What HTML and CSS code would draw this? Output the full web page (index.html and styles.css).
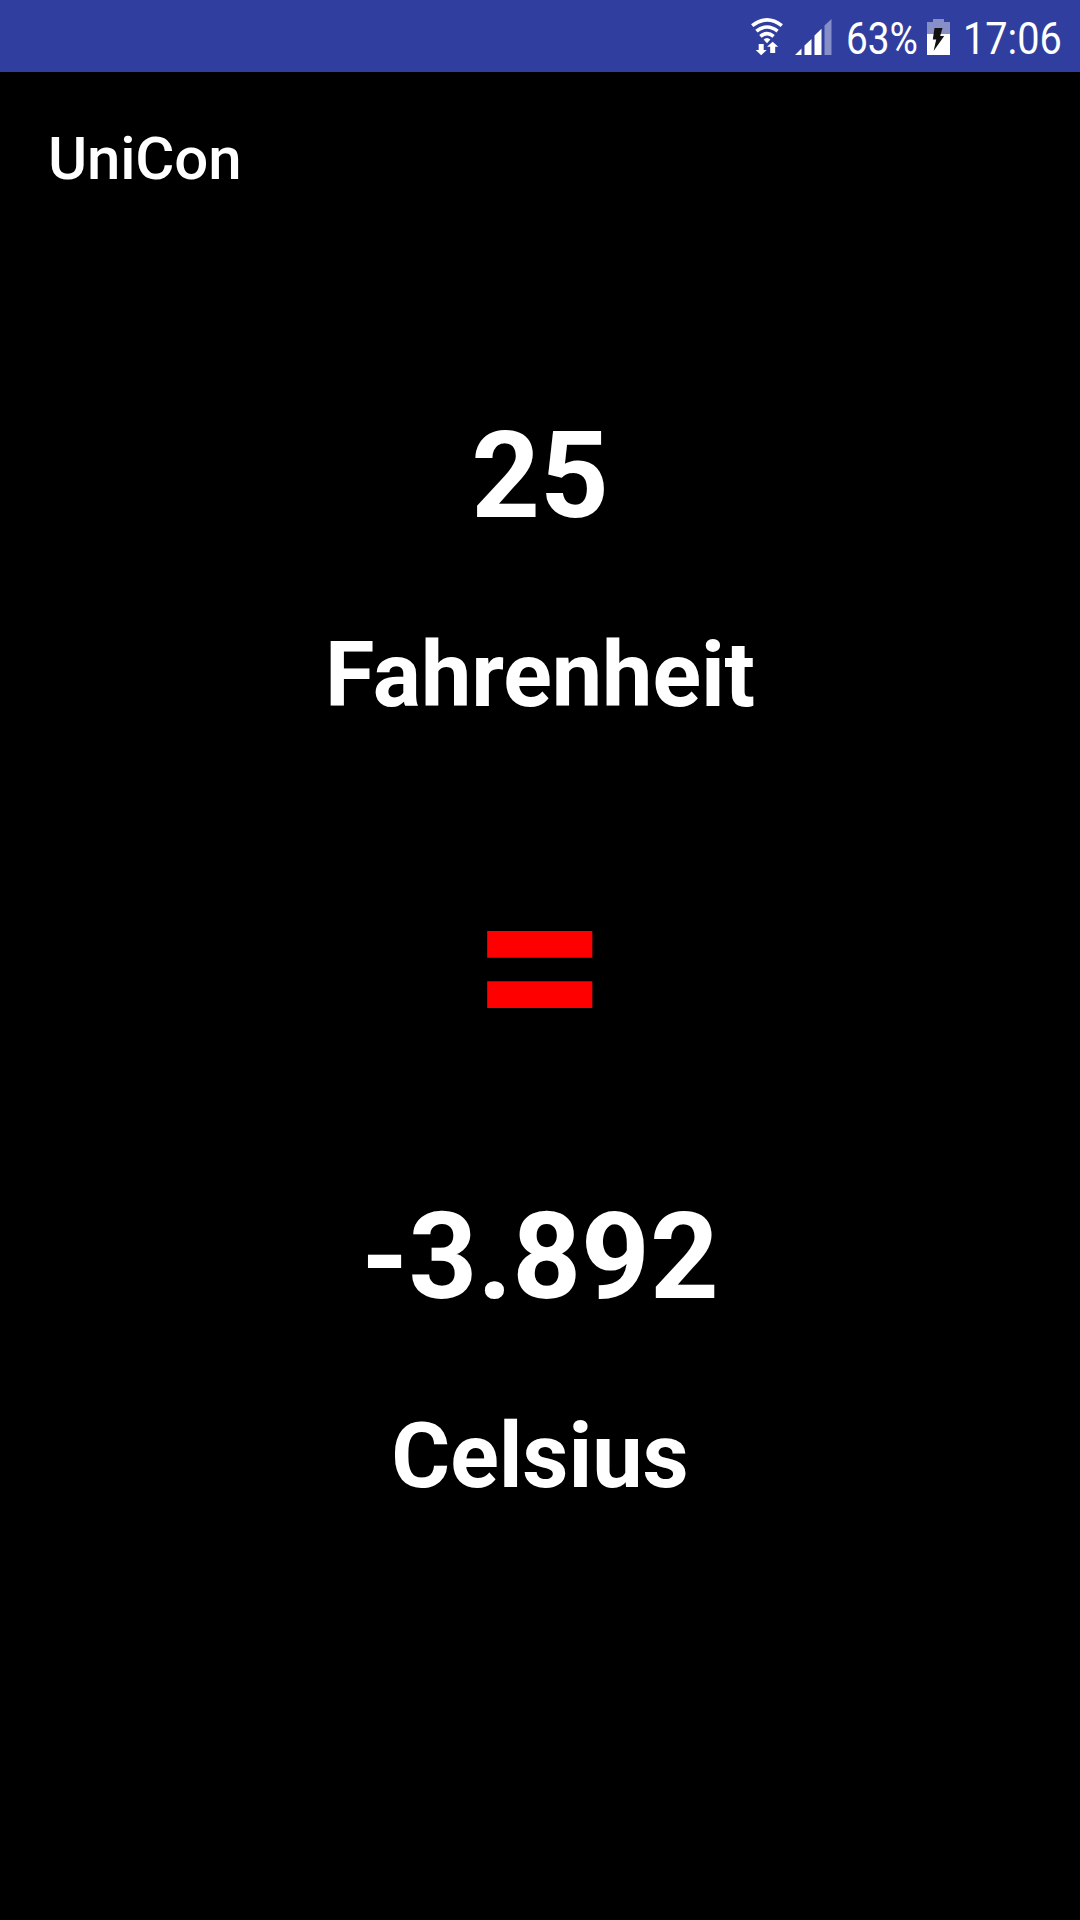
FILE: index.html
```html
<!DOCTYPE html>
<html lang="en">
<head>
<meta charset="utf-8">
<title>UniCon</title>
<link rel="stylesheet" href="styles.css">
</head>
<body>
<header class="status-bar">
  <svg class="wifi" width="32" height="37" viewBox="0 0 32 37" aria-label="Wi-Fi">
    <g fill="none" stroke="#fff" stroke-width="3.6">
      <path d="M1.200 7.700Q16 -3.900 30.800 7.700"/>
      <path d="M5.400 13.200Q16 4.800 26.600 13.200"/>
      <path d="M9.400 18.400Q16 12.900 22.600 18.400"/>
    </g>
    <path fill="#fff" d="M12.600 21.500Q16 18.500 19.400 21.500L16 25.200ZM7.700 26h5v6h3L10.200 37.200 4.700 32h3zM19.200 35v-6.200h-3.200L21.700 23.700l5.500 5.100h-3V35z"/>
  </svg>
  <svg class="signal" width="37" height="36" viewBox="0 0 37 36" aria-label="Signal">
    <path fill="#fff" d="M0 36l6.500-6.500V36zM9.500 36V26.500L16.500 20v16zM19.500 36V16.500L26.500 9.700V36z"/>
    <path fill="#fff" fill-opacity=".42" d="M29.500 36V6.500L36.500 0v36z"/>
  </svg>
  <span class="charge">63%</span>
  <svg class="battery" width="23" height="36" viewBox="0 0 23 36" aria-label="Charging">
    <path fill="#fff" fill-opacity=".42" d="M0 3h6V0h11v3h6v12H0z"/>
    <path fill="#fff" d="M0 15h23v21H0z"/>
    <path fill="#111" d="M7.500 9h8l-2.300 8h4L6.600 32l2.600-11.500H5.800z"/>
  </svg>
  <span class="clock">17:06</span>
</header>
<h1 class="app-title">UniCon</h1>
<main class="conversion">
  <div class="value">25</div>
  <div class="unit">Fahrenheit</div>
  <div class="equals">=</div>
  <div class="value">-3.892</div>
  <div class="unit">Celsius</div>
</main>
</body>
</html>
```

FILE: styles.css
```css
* { box-sizing: border-box; }

body {
  margin: 0;
  width: 1080px;
  height: 1920px;
  overflow: hidden;
  background: #000;
  color: #fff;
  font-family: Roboto, "Liberation Sans", sans-serif;
}

.status-bar {
  display: flex;
  height: 72px;
  padding-left: 751px;
  background: #303f9f;
  font-size: 45px;
  line-height: 54px;
}

.status-bar svg { flex: none; overflow: visible; }
.wifi { margin-top: 18px; }
.signal { margin: 19px 0 0 12px; }
.battery { margin-top: 19px; }

.charge,
.clock {
  flex: none;
  padding-top: 12px;
  white-space: nowrap;
  transform-origin: left;
}

.charge {
  width: 81px;
  margin-left: 14px;
  transform: scaleX(.86);
}

.clock {
  margin-left: 13px;
  transform: scaleX(.882);
}

.app-title {
  margin: 52px 0 0 48px;
  font-size: 60px;
  font-weight: 500;
  line-height: 70px;
  letter-spacing: -.2px;
}

.conversion {
  display: flex;
  flex-direction: column;
  align-items: center;
  padding-top: 212px;
  font-weight: 700;
}

.value {
  font-size: 120px;
  line-height: 140px;
}

.unit {
  margin-top: 77px;
  font-size: 90px;
  line-height: 106px;
  letter-spacing: -.1px;
}

.equals {
  height: 458px;
  padding-top: 10px;
  color: #f00;
  font-size: 240px;
  line-height: 448px;
}
```
